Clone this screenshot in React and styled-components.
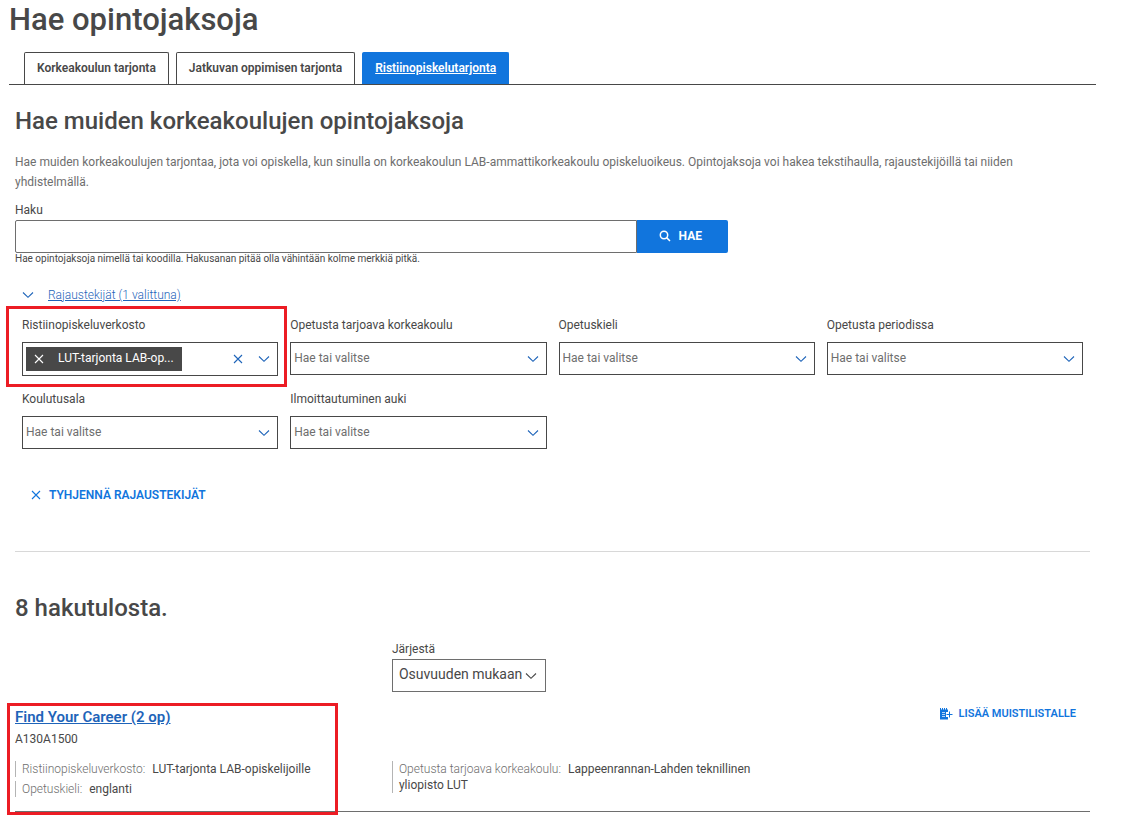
import { useState } from "react";
import styled, { createGlobalStyle } from "styled-components";

const tabs = [
  "Korkeakoulun tarjonta",
  "Jatkuvan oppimisen tarjonta",
  "Ristiinopiskelutarjonta",
];

const filters = [
  { id: "verkosto", label: "Ristiinopiskeluverkosto", selected: "LUT-tarjonta LAB-opiskelijoille" },
  { id: "korkeakoulu", label: "Opetusta tarjoava korkeakoulu" },
  { id: "kieli", label: "Opetuskieli" },
  { id: "periodi", label: "Opetusta periodissa" },
  { id: "koulutusala", label: "Koulutusala" },
  { id: "ilmoittautuminen", label: "Ilmoittautuminen auki" },
];

// chips have room for 19 characters
const shorten = (text) => (text.length > 19 ? `${text.slice(0, 19)}...` : text);

function ChevronIcon() {
  return (
    <svg width="12" height="8" viewBox="0 0 12 8" fill="none" stroke="currentColor" strokeWidth="1.1" aria-hidden="true">
      <path d="M1 1.5 6 6.3 11 1.5" />
    </svg>
  );
}

function CrossIcon() {
  return (
    <svg width="10" height="10" viewBox="0 0 10 10" fill="none" stroke="currentColor" strokeWidth="1.1" aria-hidden="true">
      <path d="M1 1 9 9M9 1 1 9" />
    </svg>
  );
}

function SearchIcon() {
  return (
    <svg width="12" height="12" viewBox="0 0 12 12" fill="none" stroke="currentColor" strokeWidth="1.5" aria-hidden="true">
      <circle cx="5" cy="5" r="3.7" />
      <path d="M7.6 7.6 11 11" />
    </svg>
  );
}

function NoteAddIcon() {
  return (
    <svg width="14" height="12" viewBox="0 0 14 12" fill="none" stroke="currentColor" aria-hidden="true">
      <path d="M1 1.5h8v2.5H7V9h2v2.5H1z" fill="currentColor" stroke="none" />
      <path d="M1.5 0v2M3.5 0v2M5.5 0v2M7.5 0v2" />
      <path d="M3 4.5h3M3 6.5h3M3 8.5h3" stroke="#fff" strokeWidth=".7" />
      <path d="M7.5 6.5h6M10.5 3.5v6" />
    </svg>
  );
}

function Filter({ filter, onRemove }) {
  return (
    <Field>
      <Label htmlFor={filter.id}>{filter.label}</Label>
      {filter.selected ? (
        <Combo $filled>
          <Chip title={filter.selected}>
            <IconBtn type="button" aria-label="Poista valinta" onClick={onRemove}>
              <CrossIcon />
            </IconBtn>
            <ChipText>{shorten(filter.selected)}</ChipText>
          </Chip>
          <ComboInput id={filter.id} />
          <IconBtn type="button" aria-label="Tyhjennä" onClick={onRemove}>
            <CrossIcon />
          </IconBtn>
          <IconBtn type="button" aria-label="Avaa lista">
            <ChevronIcon />
          </IconBtn>
        </Combo>
      ) : (
        <Combo>
          <ComboInput id={filter.id} placeholder="Hae tai valitse" />
          <IconBtn type="button" aria-label="Avaa lista">
            <ChevronIcon />
          </IconBtn>
        </Combo>
      )}
      {filter.id === "verkosto" && <FilterMark />}
    </Field>
  );
}

function App() {
  const [activeTab, setActiveTab] = useState(tabs[2]);
  const [cleared, setCleared] = useState(false);

  const clearFilters = () => setCleared(true);

  return (
    <Page>
      <GlobalStyle />
      <Title>Hae opintojaksoja</Title>
      <TabList role="tablist">
        {tabs.map((tab) => (
          <Tab
            key={tab}
            type="button"
            role="tab"
            aria-selected={tab === activeTab}
            $active={tab === activeTab}
            onClick={() => setActiveTab(tab)}
          >
            {tab}
          </Tab>
        ))}
      </TabList>

      <Panel>
        <Heading>Hae muiden korkeakoulujen opintojaksoja</Heading>
        <Intro>
          Hae muiden korkeakoulujen tarjontaa, jota voi opiskella, kun sinulla on korkeakoulun
          LAB-ammattikorkeakoulu opiskeluoikeus. Opintojaksoja voi hakea tekstihaulla,
          rajaustekijöillä tai niiden yhdistelmällä.
        </Intro>

        <Label htmlFor="haku">Haku</Label>
        <SearchRow>
          <SearchInput id="haku" type="text" />
          <SearchBtn type="button">
            <SearchIcon />
            HAE
          </SearchBtn>
        </SearchRow>
        <Hint>Hae opintojaksoja nimellä tai koodilla. Hakusanan pitää olla vähintään kolme merkkiä pitkä.</Hint>

        <Toggle href="#rajaustekijat">
          <ChevronIcon />
          <span>Rajaustekijät (1 valittuna)</span>
        </Toggle>

        <Filters id="rajaustekijat">
          {filters.map((f) => (
            <Filter key={f.id} filter={cleared ? { ...f, selected: null } : f} onRemove={clearFilters} />
          ))}
        </Filters>
        <ClearBtn type="button" onClick={clearFilters}>
          <CrossIcon />
          TYHJENNÄ RAJAUSTEKIJÄT
        </ClearBtn>

        <Divider />

        <Heading>8 hakutulosta.</Heading>
        <Columns>
          <SortField>
            <Label htmlFor="jarjesta">Järjestä</Label>
            <SortBox>
              <Sort id="jarjesta">
                <option>Osuvuuden mukaan</option>
              </Sort>
              <ChevronIcon />
            </SortBox>
          </SortField>
        </Columns>

        <Result>
          <ResultTop>
            <ResultLink href="#find-your-career">Find Your Career (2 op)</ResultLink>
            <MemoBtn type="button">
              <NoteAddIcon />
              LISÄÄ MUISTILISTALLE
            </MemoBtn>
          </ResultTop>
          <Code>A130A1500</Code>
          <Columns>
            <Details>
              <Detail>
                <Term>Ristiinopiskeluverkosto:</Term> LUT-tarjonta LAB-opiskelijoille
              </Detail>
              <Detail>
                <Term>Opetuskieli:</Term> englanti
              </Detail>
            </Details>
            <Details>
              <Detail>
                <Term>Opetusta tarjoava korkeakoulu:</Term> Lappeenrannan-Lahden teknillinen yliopisto LUT
              </Detail>
            </Details>
          </Columns>
          <ResultMark />
        </Result>
      </Panel>
    </Page>
  );
}

export default App;

const GlobalStyle = createGlobalStyle`
  * {
    box-sizing: border-box;
  }
  body {
    margin: 0;
    background: #fff;
    color: #484848;
    font-family: Roboto, "Liberation Sans", sans-serif;
    font-size: 12px;
    line-height: 20px;
  }
  button, input, select {
    font: inherit;
    color: inherit;
    margin: 0;
  }
  button {
    cursor: pointer;
  }
`;

const Page = styled.main`
  padding: 0 31px 7px 9px;
`;

const Title = styled.h1`
  margin: 0 0 12px;
  font-size: 31px;
  font-weight: 500;
  line-height: 40px;
`;

const TabList = styled.div`
  display: flex;
  gap: 7px;
  padding-left: 15px;
  border-bottom: 1px solid #484848;
`;

const Tab = styled.button`
  height: 32px;
  padding: 0 12px 2px;
  border: 1px solid ${(p) => (p.$active ? "#1175dd" : "#484848")};
  border-bottom: 0;
  border-radius: 2px 2px 0 0;
  background: ${(p) => (p.$active ? "#1175dd" : "#fff")};
  color: ${(p) => (p.$active ? "#fff" : "#484848")};
  font-weight: 600;
  text-decoration: ${(p) => (p.$active ? "underline" : "none")};
`;

const Panel = styled.section`
  padding: 20px 6px 0;
`;

const Heading = styled.h2`
  margin: 0 0 15px;
  font-size: 24px;
  font-weight: 500;
  line-height: 32px;
`;

const Intro = styled.p`
  max-width: 1040px;
  margin: 0 0 8px;
  color: #6e6e6e;
`;

const Label = styled.label`
  display: block;
`;

const SearchRow = styled.div`
  display: flex;
  max-width: 713px;
`;

const SearchInput = styled.input`
  flex: 1;
  min-width: 0;
  height: 33px;
  padding: 0 8px;
  border: 1px solid #6e6e6e;
  border-radius: 2px 0 0 2px;
`;

const SearchBtn = styled.button`
  display: flex;
  align-items: center;
  gap: 8px;
  height: 33px;
  padding: 0 26px 2px 22px;
  border: 0;
  border-radius: 0 2px 2px 0;
  background: #1175dd;
  color: #fff;
  font-weight: 700;
`;

const Hint = styled.p`
  margin: 0 0 20px;
  font-size: 10px;
  line-height: 12px;
`;

const Toggle = styled.a`
  display: flex;
  align-items: center;
  gap: 14px;
  margin: 0 0 10px 7px;
  color: #1e64b9;
  font-weight: 300;
  text-decoration: none;

  span {
    text-decoration: underline;
  }
`;

const Filters = styled.div`
  display: grid;
  grid-template-columns: repeat(4, 1fr);
  gap: 13px 12px;
  padding: 0 7px;
`;

const Field = styled.div`
  position: relative;
  min-width: 0;
`;

const Combo = styled.div`
  display: flex;
  align-items: center;
  height: ${(p) => (p.$filled ? "34px" : "33px")};
  margin-top: 7px;
  padding-left: 3px;
  border: 1px solid #484848;
  color: #1e64b9;
`;

const ComboInput = styled.input`
  flex: 1;
  min-width: 0;
  padding: 0 0 2px;
  border: 0;
  outline: 0;
  background: none;
  color: #484848;

  &::placeholder {
    color: #6e6e6e;
    opacity: 1;
  }
`;

const IconBtn = styled.button`
  display: flex;
  align-items: center;
  justify-content: center;
  width: 26px;
  height: 24px;
  padding: 0;
  border: 0;
  background: none;
`;

const Chip = styled.span`
  display: flex;
  align-items: center;
  height: 24px;
  padding-right: 8px;
  background: #484848;
  color: #fff;
`;

const ChipText = styled.span`
  margin-left: 6px;
  padding-bottom: 2px;
  white-space: nowrap;
`;

const FilterMark = styled.div`
  position: absolute;
  inset: -9px -9px -11px -16px;
  border: 3px solid #ec1c24;
  pointer-events: none;
`;

const ClearBtn = styled.button`
  display: flex;
  align-items: center;
  gap: 8px;
  margin: 36px 0 0 16px;
  padding: 0;
  border: 0;
  background: none;
  color: #1175dd;
  font-weight: 600;
`;

const Divider = styled.hr`
  height: 1px;
  margin: 46px 0 40px;
  border: 0;
  background: #d8d8d8;
`;

const Columns = styled.div`
  display: grid;
  grid-template-columns: 27fr 27fr 23fr;
`;

const SortField = styled.div`
  grid-column: 2;
  width: 154px;
  margin-bottom: 15px;
`;

const SortBox = styled.div`
  display: grid;
  align-items: center;

  > * {
    grid-area: 1 / 1;
  }

  svg {
    justify-self: end;
    margin-right: 9px;
    pointer-events: none;
  }
`;

const Sort = styled.select`
  width: 100%;
  height: 33px;
  padding: 0 20px 4px 6px;
  border: 1px solid #6e6e6e;
  border-radius: 0;
  appearance: none;
  background: #fff;
  font-size: 14px;
`;

const Result = styled.article`
  position: relative;
  padding-bottom: 14px;
  border-bottom: 1px solid #6e6e6e;
`;

const ResultTop = styled.div`
  display: flex;
  justify-content: space-between;
  align-items: flex-start;
  padding-right: 14px;
`;

const ResultLink = styled.a`
  color: #1e64b9;
  font-size: 15px;
  font-weight: 600;
`;

const MemoBtn = styled.button`
  display: flex;
  align-items: center;
  gap: 6px;
  padding: 0;
  border: 0;
  background: none;
  color: #1175dd;
  font-size: 11px;
  font-weight: 600;
  line-height: 14px;
`;

const Code = styled.div`
  margin: 2px 0 12px;
`;

const Details = styled.div`
  display: grid;
  gap: 4px;
  align-content: start;
`;

const Detail = styled.div`
  padding-left: 6px;
  border-left: 1px solid #b4b4b4;
  line-height: 16px;
`;

const Term = styled.span`
  margin-right: 4px;
  color: #6e6e6e;
  font-weight: 300;
`;

const ResultMark = styled.div`
  position: absolute;
  top: -4px;
  bottom: -4px;
  left: -8px;
  width: 331px;
  border: 3px solid #ec1c24;
  pointer-events: none;
`;
